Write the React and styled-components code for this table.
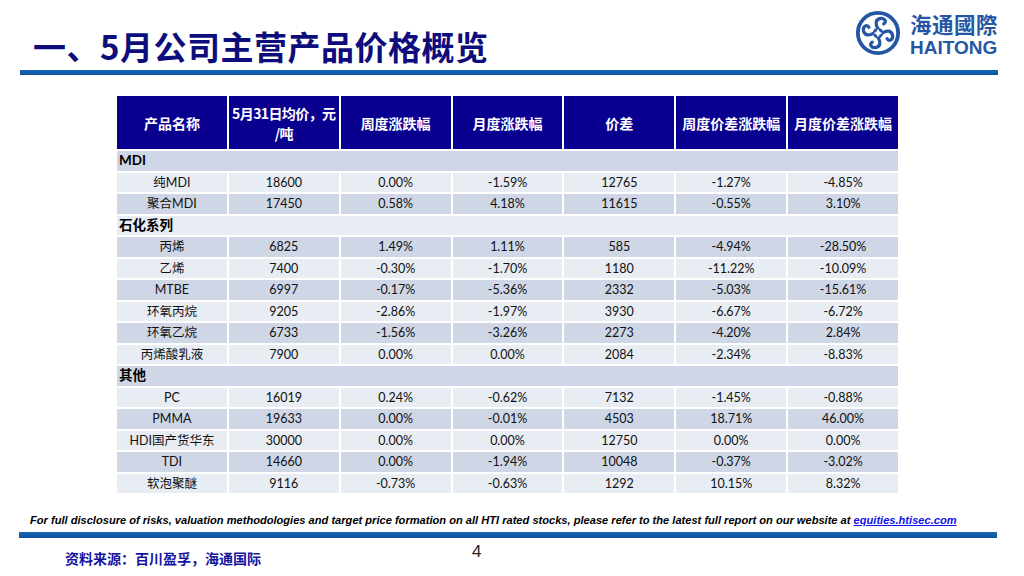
import React from "react";
import styled, { createGlobalStyle } from "styled-components";

const GlobalStyle = createGlobalStyle`
  html, body {
    margin: 0;
    padding: 0;
    background: #fff;
  }
`;

const cjk = `"Noto Sans CJK SC", "Noto Sans", sans-serif`;
const latin = `Lato, "Noto Sans CJK SC", sans-serif`;

const groups = [
  {
    name: "MDI",
    rows: [
      ["纯MDI", "18600", "0.00%", "-1.59%", "12765", "-1.27%", "-4.85%"],
      ["聚合MDI", "17450", "0.58%", "4.18%", "11615", "-0.55%", "3.10%"],
    ],
  },
  {
    name: "石化系列",
    rows: [
      ["丙烯", "6825", "1.49%", "1.11%", "585", "-4.94%", "-28.50%"],
      ["乙烯", "7400", "-0.30%", "-1.70%", "1180", "-11.22%", "-10.09%"],
      ["MTBE", "6997", "-0.17%", "-5.36%", "2332", "-5.03%", "-15.61%"],
      ["环氧丙烷", "9205", "-2.86%", "-1.97%", "3930", "-6.67%", "-6.72%"],
      ["环氧乙烷", "6733", "-1.56%", "-3.26%", "2273", "-4.20%", "2.84%"],
      ["丙烯酸乳液", "7900", "0.00%", "0.00%", "2084", "-2.34%", "-8.83%"],
    ],
  },
  {
    name: "其他",
    rows: [
      ["PC", "16019", "0.24%", "-0.62%", "7132", "-1.45%", "-0.88%"],
      ["PMMA", "19633", "0.00%", "-0.01%", "4503", "18.71%", "46.00%"],
      ["HDI国产货华东", "30000", "0.00%", "0.00%", "12750", "0.00%", "0.00%"],
      ["TDI", "14660", "0.00%", "-1.94%", "10048", "-0.37%", "-3.02%"],
      ["软泡聚醚", "9116", "-0.73%", "-0.63%", "1292", "10.15%", "8.32%"],
    ],
  },
];

const Page = styled.div`
  width: 1024px;
  height: 576px;
  overflow: hidden;
  background: #fff;
  display: flex;
  flex-direction: column;
`;

const Header = styled.div`
  height: 70px;
  display: flex;
  justify-content: space-between;
  align-items: flex-end;
  padding: 0 26px 0 33px;
`;

const Title = styled.h1`
  margin: 0 0 4px;
  font-family: ${cjk};
  font-weight: 700;
  font-size: 33px;
  line-height: 40px;
  color: #0d0d7c;
  letter-spacing: 0.5px;
`;

const Logo = styled.div`
  display: flex;
  align-items: center;
  gap: 9px;
  margin-bottom: 14px;
  color: #2456a4;
`;

const LogoText = styled.div`
  display: flex;
  flex-direction: column;
  align-items: flex-start;
  gap: 3px;
`;

const LogoCn = styled.span`
  font-family: ${cjk};
  font-weight: 700;
  font-size: 21.5px;
  line-height: 27px;
  letter-spacing: 0.5px;
`;

const LogoEn = styled.span`
  font-family: "Liberation Sans", Arial, sans-serif;
  font-weight: 700;
  font-size: 19px;
  line-height: 16px;
`;

const Rule = styled.div`
  margin-left: ${(p) => p.$left}px;
  width: ${(p) => p.$width}px;
  height: ${(p) => p.$height}px;
  background: linear-gradient(#1a66b4, #0b52a0);
  flex-shrink: 0;
`;

const Table = styled.div`
  margin: 21px 0 0 117px;
  width: 781px;
  display: grid;
  grid-template-columns: repeat(7, 1fr);
  column-gap: 2px;
  row-gap: 2px;
`;

const HeadCell = styled.div`
  height: 53px;
  background: #0a0090;
  color: #fff;
  font-family: ${cjk};
  font-weight: 700;
  font-size: 14px;
  line-height: 20px;
  display: flex;
  flex-direction: column;
  align-items: center;
  justify-content: ${(p) => (p.$top ? "flex-start" : "center")};
  text-align: center;
  white-space: nowrap;
  letter-spacing: ${(p) => (p.$top ? "-0.6px" : "0")};
  padding-top: ${(p) => (p.$top ? "7px" : "0")};
  box-sizing: border-box;
  overflow: hidden;
`;

const GroupCell = styled.div`
  grid-column: 1 / -1;
  height: 19.5px;
  background: ${(p) => (p.$dark ? "#cfd6e5" : "#e8ecf3")};
  font-family: ${latin};
  font-weight: 700;
  font-size: 13.5px;
  line-height: 19.5px;
  color: #000;
  padding-left: 2px;
`;

const Cell = styled.div`
  height: 19.5px;
  background: ${(p) => (p.$dark ? "#cfd6e5" : "#e8ecf3")};
  font-family: ${latin};
  font-size: 12.5px;
  line-height: 19.5px;
  color: #111;
  text-align: center;
  white-space: nowrap;
`;

const Disclaimer = styled.p`
  margin: 20px 0 5px 30px;
  font-family: "Liberation Sans", Arial, sans-serif;
  font-style: italic;
  font-weight: 700;
  font-size: 11.1px;
  line-height: 14px;
  color: #000;
  white-space: nowrap;

  a {
    color: #1010ee;
    text-decoration: underline;
  }
`;

const Bottom = styled.div`
  display: flex;
  padding-left: 65px;
`;

const Source = styled.div`
  width: 407px;
  margin-top: 12px;
  font-family: ${cjk};
  font-weight: 700;
  font-size: 14px;
  line-height: 16px;
  color: #1414a0;
`;

const PageNum = styled.div`
  margin-top: 4px;
  font-family: "Liberation Sans", Arial, sans-serif;
  font-size: 17px;
  line-height: 20px;
  color: #222;
`;

function LogoMark() {
  const arm = "M24 19.5 C 21 15, 21 10, 26.5 8.8 C 31 8, 33.5 12.5, 30 14.5";
  return (
    <svg width="46" height="46" viewBox="0 0 48 48">
      <circle cx="24" cy="24" r="21" fill="none" stroke="currentColor" strokeWidth="4" />
      {[0, 90, 180, 270].map((r) => (
        <path
          key={r}
          d={arm}
          fill="none"
          stroke="currentColor"
          strokeWidth="3.4"
          strokeLinecap="round"
          transform={`rotate(${r} 24 24)`}
        />
      ))}
      <circle cx="24" cy="24" r="5.5" fill="currentColor" />
      <path d="M24 19.5 Q25 23 28.5 24 Q25 25 24 28.5 Q23 25 19.5 24 Q23 23 24 19.5Z" fill="#fff" />
    </svg>
  );
}

export default function App() {
  let idx = 0;
  return (
    <Page>
      <GlobalStyle />
      <Header>
        <Title>一、5月公司主营产品价格概览</Title>
        <Logo>
          <LogoMark />
          <LogoText>
            <LogoCn>海通國際</LogoCn>
            <LogoEn>HAITONG</LogoEn>
          </LogoText>
        </Logo>
      </Header>
      <Rule $left={20} $width={978} $height={5} />

      <Table>
        <HeadCell>产品名称</HeadCell>
        <HeadCell $top>
          <span>5月31日均价，元</span>
          <span>/吨</span>
        </HeadCell>
        <HeadCell>周度涨跌幅</HeadCell>
        <HeadCell>月度涨跌幅</HeadCell>
        <HeadCell>价差</HeadCell>
        <HeadCell>周度价差涨跌幅</HeadCell>
        <HeadCell>月度价差涨跌幅</HeadCell>
        {groups.map((g) => {
          const gDark = idx++ % 2 === 0;
          return (
            <React.Fragment key={g.name}>
              <GroupCell $dark={gDark}>{g.name}</GroupCell>
              {g.rows.map((row) => {
                const dark = idx++ % 2 === 0;
                return row.map((v, i) => (
                  <Cell key={row[0] + i} $dark={dark}>
                    {v}
                  </Cell>
                ));
              })}
            </React.Fragment>
          );
        })}
      </Table>

      <Disclaimer>
        For full disclosure of risks, valuation methodologies and target price formation on all HTI rated
        stocks, please refer to the latest full report on our website at{" "}
        <a href="#">equities.htisec.com</a>
      </Disclaimer>
      <Rule $left={19} $width={978} $height={6} />
      <Bottom>
        <Source>资料来源：百川盈孚，海通国际</Source>
        <PageNum>4</PageNum>
      </Bottom>
    </Page>
  );
}
